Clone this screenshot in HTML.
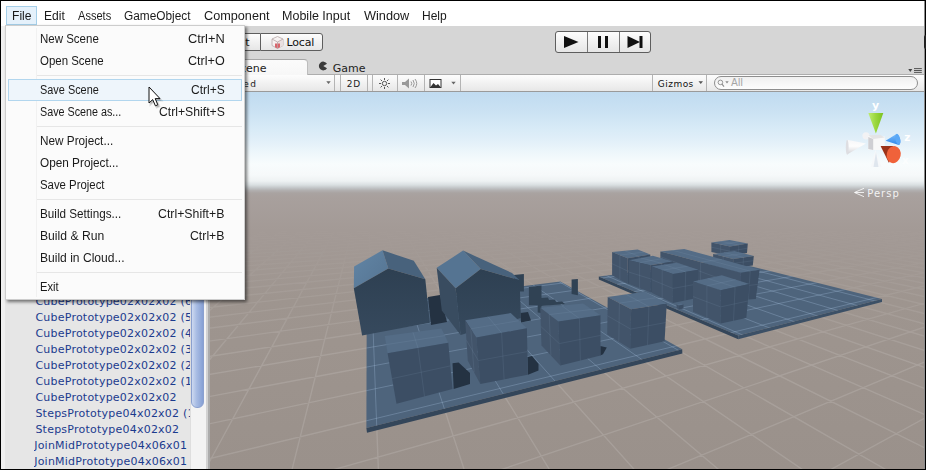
<!DOCTYPE html>
<html><head><meta charset="utf-8"><title>Unity</title>
<style>
html,body{margin:0;padding:0}
body{width:926px;height:470px;overflow:hidden;background:#000;position:relative;font-family:"Liberation Sans",sans-serif}
div,span,svg{position:absolute;box-sizing:border-box}
#root{left:0;top:0;width:926px;height:470px;overflow:hidden}
.t{white-space:pre}
#menubar{left:1px;top:1px;width:924px;height:25px;background:#fff}
#filebox{left:5.5px;top:6px;width:31.5px;height:19px;background:#e5f1fb;border:1px solid #a5cfe9}
#lstrip{left:1px;top:26px;width:4px;height:443px;background:#f0f0f0}
#hier{left:4.5px;top:59px;width:186px;height:410px;background:#e6e6e6}
#track{left:190px;top:59px;width:15.5px;height:410px;background:#f3f3f3;border-left:1px solid #dedede}
#thumb{left:191px;top:190px;width:12.5px;height:218px;border-radius:6px;background:linear-gradient(90deg,#cdd9f0,#a9bde4 40%,#86a0d4);border:1px solid #8aa0cf}
#div1{left:205.5px;top:59px;width:2px;height:410px;background:#d2d2d2}
#div2{left:207.5px;top:59px;width:2px;height:410px;background:#acacac}
.scene{left:0;top:0}
#menu{left:5px;top:25px;width:240px;height:275px;background:#fbfbfb;border:1px solid #cdcdcd;box-shadow:2px 2px 3px rgba(0,0,0,.5)}
#gut{left:36px;top:28px;width:1px;height:269px;background:#f1f1f1}
.sep{left:36.5px;width:205px;height:1px;background:#e6e6e6}
#hl{left:8px;top:79px;width:234px;height:21.5px;background:#eef5fb;border:1px solid #b2d6ee}
.btn{height:18px;top:33px;border:1px solid #5e5e5e;background:linear-gradient(#fdfdfd,#e6e6e6)}
#tabscene{left:209px;top:58.5px;width:98.5px;height:16.5px;background:linear-gradient(#fbfbfb,#f7f7f7);border:1px solid #a6a6a6;border-bottom:0;border-left:0;border-right-color:#bdbdbd;border-radius:0 4px 0 0}
#stb{left:209px;top:74px;width:715px;height:18px;background:linear-gradient(#fdfdfd,#e7e7e7);border-bottom:1px solid #9a9a9a;border-top:1px solid #adadad}
.vs{top:75px;width:1px;height:16px;background:#b4b4b4}
</style></head><body>
<div id="root">
<div id="menubar"></div>
<div id="filebox"></div>
<div id="toolbar" style="left:1px;top:26px;width:923.5px;height:49px;background:#d6d6d6"></div>
<div class="btn" style="left:235px;width:25px;border-radius:3px 0 0 3px;border-right:0"></div>
<div class="btn" style="left:259.5px;width:63px;border-radius:0 3px 3px 0">
<svg style="left:10.5px;top:2px" width="13" height="13" viewBox="0 0 13 13"><polygon points="6.500,0.500 12,3 12,9.500 6.500,12.500 1,9.500 1,3" fill="#f6f2f2" stroke="#b8a8a8" stroke-width="0.800"/><polygon points="6.500,6 12,3 12,9.500 6.500,12.500" fill="#e9e0e0"/><polygon points="4,7.500 9,7.500 9,11.300 6.500,12.500 4,11.300" fill="#d9656c"/><path d="M1 3 L6.500 6 L12 3 M6.500 6 L6.500 12.500" stroke="#b8a4a4" stroke-width="0.800" fill="none"/></svg></div>
<div class="btn" style="left:555px;top:31px;width:96px;height:22px;border-radius:3px"></div>
<div style="left:587px;top:32px;width:1px;height:20px;background:#7a7a7a"></div>
<div style="left:619px;top:32px;width:1px;height:20px;background:#7a7a7a"></div>
<svg style="left:555px;top:31px" width="96" height="22" viewBox="0 0 96 22"><polygon points="9,5 23.500,11 9,17" fill="#111"/><rect x="43" y="5" width="3" height="12" fill="#111"/><rect x="50" y="5" width="3" height="12" fill="#111"/><polygon points="72.500,5 85,11 72.500,17" fill="#111"/><rect x="84.500" y="5" width="3" height="12" fill="#111"/></svg>
<div style="left:923.7px;top:34.5px;width:2px;height:14.5px;background:#222;border-radius:2px 0 0 2px;z-index:5"></div>
<svg style="left:318px;top:61.4px" width="10" height="10" viewBox="0 0 10 10"><path d="M5.300 5 L9 2.700 A4.400 4.400 0 1 0 9 7.300 Z" fill="#3a3a3a"/></svg>
<svg style="left:906px;top:66px" width="18" height="9" viewBox="0 0 18 9"><polygon points="2.300,3 6.300,3 4.300,5.900" fill="#444"/><path d="M8 2.600h7.800M8 4.500h7.800M8 6.400h7.800" stroke="#444" stroke-width="0.9"/></svg>
<div id="stb"></div>
<div id="tabscene"></div>
<svg style="left:325.5px;top:80.5px" width="6" height="4" viewBox="0 0 6 4"><polygon points="0.300,0.300 4.700,0.300 2.500,3" fill="#666"/></svg>
<div class="vs" style="left:334px"></div><div class="vs" style="left:340px"></div>
<div class="vs" style="left:367px"></div><div class="vs" style="left:372px"></div>
<div class="vs" style="left:397px"></div><div class="vs" style="left:423.5px"></div><div class="vs" style="left:460.3px"></div>
<svg style="left:375.3px;top:76px" width="90" height="15" viewBox="0 0 90 15">
<g stroke="#444" stroke-width="0.9" fill="none"><circle cx="9.500" cy="7.500" r="2.200"/><path d="M9.500 2v2M9.500 11v2M4 7.500h2M13 7.500h2M5.600 3.600l1.400 1.400M12 10l1.400 1.400M13.400 3.600l-1.400 1.400M7 10l-1.400 1.400"/></g>
<g fill="#999"><polygon points="27,6 30,6 34,2.500 34,12.500 30,9 27,9"/></g><g stroke="#999" fill="none" stroke-width="1"><path d="M36 5.500q1.500 2 0 4M38 4q2.500 3.500 0 7M40 3q3.500 4.500 0 9"/></g>
<rect x="55" y="3.500" width="11" height="8" fill="#fff" stroke="#333" stroke-width="1"/><polygon points="55.500,11 58.500,7 61,9.500 63,8 65.500,11" fill="#333"/>
<polygon points="76.300,5.800 80.700,5.800 78.500,8.500" fill="#666"/>
</svg>
<div class="vs" style="left:651.5px"></div><div class="vs" style="left:706px"></div>
<svg style="left:698px;top:81px" width="6" height="4" viewBox="0 0 6 4"><polygon points="0.500,0.300 5,0.300 2.750,3" fill="#555"/></svg>
<div style="left:714px;top:76px;width:204px;height:14px;border:1px solid #8e8e8e;border-radius:7px;background:linear-gradient(#f0f0f0,#fdfdfd)"></div>
<svg style="left:717px;top:78px" width="14" height="11" viewBox="0 0 14 11"><circle cx="3.400" cy="4.400" r="2.300" fill="none" stroke="#8a8a8a" stroke-width="0.9"/><path d="M5 6.200L7 8.600" stroke="#8a8a8a" stroke-width="1.100"/><polygon points="8.300,3.200 11.700,3.200 10,5.600" fill="#8a8a8a"/></svg>
<svg class="scene" width="926" height="470" viewBox="0 0 926 470">
<defs>
<linearGradient id="sky" x1="0" y1="92" x2="0" y2="470" gradientUnits="userSpaceOnUse">
<stop offset="0.0000" stop-color="#c0dbf0"/>
<stop offset="0.0529" stop-color="#cbe2f3"/>
<stop offset="0.1005" stop-color="#d9ebf7"/>
<stop offset="0.1323" stop-color="#e3f0f9"/>
<stop offset="0.1614" stop-color="#eef7fb"/>
<stop offset="0.1905" stop-color="#f8fcfd"/>
<stop offset="0.2196" stop-color="#f6f9fa"/>
<stop offset="0.2354" stop-color="#eef2f3"/>
<stop offset="0.2460" stop-color="#d9dfe1"/>
<stop offset="0.2540" stop-color="#c1c4c6"/>
<stop offset="0.2606" stop-color="#b1afaf"/>
<stop offset="0.2672" stop-color="#a9a3a1"/>
<stop offset="0.2778" stop-color="#a8a09d"/>
<stop offset="0.3651" stop-color="#a39a96"/>
<stop offset="0.5503" stop-color="#9e958f"/>
<stop offset="1.0000" stop-color="#9a918b"/>
</linearGradient>
<linearGradient id="fade" x1="0" y1="200" x2="0" y2="360" gradientUnits="userSpaceOnUse">
<stop offset="0" stop-color="#fff" stop-opacity="0"/>
<stop offset="0.3" stop-color="#fff" stop-opacity="0.12"/>
<stop offset="0.6" stop-color="#fff" stop-opacity="0.55"/>
<stop offset="1" stop-color="#fff" stop-opacity="1"/>
</linearGradient>
<linearGradient id="rl" x1="354" y1="255" x2="390" y2="285" gradientUnits="userSpaceOnUse"><stop offset="0" stop-color="#6184a4"/><stop offset="1" stop-color="#557492"/></linearGradient>
<linearGradient id="hf" x1="0" y1="270" x2="0" y2="335" gradientUnits="userSpaceOnUse"><stop offset="0" stop-color="#2e4052"/><stop offset="1" stop-color="#36495d"/></linearGradient>
<mask id="gm"><rect x="0" y="190" width="926" height="300" fill="url(#fade)"/></mask>
<clipPath id="cv"><rect x="209.5" y="92" width="714.5" height="377"/></clipPath>
<clipPath id="sc1"><polygon points="366.4,428.0 682.2,349.2 560.3,281.4 366.7,305.7"/><polygon points="598.8,276.5 738.2,335.6 882.0,299.0 727.0,260.4"/></clipPath>
</defs>
<g clip-path="url(#cv)">
<rect x="209" y="92" width="715" height="377" fill="url(#sky)"/>
<path d="M-69442.5 5522.4L-86.8 206.0M-67691.6 5540.3L-70.3 205.7M-65940.6 5558.2L-54.3 205.5M-64189.6 5576.1L-38.6 205.2M-62438.6 5594.0L-23.3 204.9M-60687.6 5611.9L-8.3 204.7M-58936.6 5629.8L6.4 204.4M-57185.6 5647.7L20.8 204.2M-55434.7 5665.6L34.9 203.9M-53683.7 5683.5L48.6 203.7M-51932.7 5701.4L62.1 203.5M-50181.7 5719.3L75.3 203.2M-48430.7 5737.2L88.3 203.0M-46679.7 5755.2L101.0 202.8M-44928.7 5773.1L113.4 202.6M-43177.8 5791.0L125.6 202.4M-41426.8 5808.9L137.6 202.2M-39675.8 5826.8L149.3 202.0M-37924.8 5844.7L160.8 201.8M-36173.8 5862.6L172.1 201.6M-34422.8 5880.5L183.2 201.4M-32671.8 5898.4L194.0 201.2M-30920.9 5916.3L204.7 201.0M-29169.9 5934.2L215.2 200.8M-27418.9 5952.1L225.5 200.7M-25667.9 5970.0L235.6 200.5M-23916.9 5987.9L245.5 200.3M-22165.9 6005.8L255.3 200.2M-20414.9 6023.8L264.9 200.0M-18664.0 6041.7L274.3 199.8M-16913.0 6059.6L283.5 199.7M-15162.0 6077.5L292.6 199.5M-13411.0 6095.4L301.6 199.4M-11660.0 6113.3L310.4 199.2M-9909.0 6131.2L319.0 199.1M-8158.0 6149.1L327.5 198.9M-6407.1 6167.0L335.9 198.8M-4656.1 6184.9L344.1 198.6M-2905.1 6202.8L352.3 198.5M-1154.1 6220.7L360.2 198.4M596.9 6238.6L368.1 198.2M2347.9 6256.5L375.8 198.1M2995.7 4470.3L383.4 198.0M2087.0 2091.4L390.9 197.8M1826.7 1410.0L398.3 197.7M1703.3 1086.9L405.6 197.6M1631.3 898.4L412.7 197.5M1584.1 774.8L419.8 197.4M1550.8 687.6L426.7 197.2M1526.0 622.7L433.6 197.1M1506.8 572.6L440.3 197.0M1491.6 532.6L446.9 196.9M1479.2 500.1L453.5 196.8M1468.9 473.1L459.9 196.7M1460.2 450.3L466.3 196.6M1452.7 430.8L472.6 196.5M1446.3 414.0L478.8 196.3M1440.6 399.3L484.9 196.2M1435.7 386.3L490.9 196.1M1431.3 374.8L496.8 196.0M1427.4 364.5L502.7 195.9M1423.8 355.3L508.5 195.8M1420.6 346.9L514.2 195.7M1417.7 339.3L519.8 195.6M1415.1 332.4L525.3 195.6M1412.7 326.0L530.8 195.5M1410.4 320.2L536.2 195.4M1408.4 314.8L541.5 195.3M1406.5 309.8L546.8 195.2M1404.7 305.2L552.0 195.1M1403.1 300.9L557.1 195.0M1401.5 296.9L562.2 194.9M1400.1 293.1L567.2 194.8M1398.8 289.6L572.1 194.8M1397.5 286.3L577.0 194.7M1396.3 283.2L581.8 194.6M1395.2 280.3L586.6 194.5M1394.1 277.5L591.3 194.4M1393.1 274.9L595.9 194.3M1392.2 272.4L600.5 194.3M1391.3 270.1L605.0 194.2M1390.5 267.9L609.5 194.1M1389.6 265.7L613.9 194.0M1388.9 263.7L618.3 194.0M1388.1 261.8L622.6 193.9M1387.4 260.0L626.9 193.8M1386.8 258.2L631.1 193.7M1386.1 256.5L635.3 193.7M1385.5 254.9L639.4 193.6M1384.9 253.4L643.5 193.5M1384.4 251.9L647.5 193.5M1383.8 250.5L651.5 193.4M1383.3 249.1L655.5 193.3M1382.8 247.8L659.4 193.3M1382.3 246.6L663.2 193.2M1381.9 245.4L667.0 193.1M1381.4 244.2L670.8 193.1M1381.0 243.1L674.6 193.0M1380.6 242.0L678.2 192.9M1380.2 240.9L681.9 192.9M1379.8 239.9L685.5 192.8M1379.4 238.9L689.1 192.8M1379.0 238.0L692.6 192.7M1378.7 237.1L696.1 192.6M1378.3 236.2L699.6 192.6M1378.0 235.3L703.0 192.5M1377.7 234.5L706.4 192.5M1377.4 233.7L709.7 192.4M1377.1 232.9L713.1 192.3M1376.8 232.1L716.4 192.3M11456.8 7145.3L1401.3 211.6M7722.6 7107.1L1384.6 211.0M3988.4 7069.0L1368.5 210.3M254.2 7030.8L1352.8 209.7M-3480.1 6992.6L1337.7 209.1M-7214.3 6954.4L1323.0 208.6M-10948.5 6916.2L1308.7 208.0M-14682.7 6878.0L1294.9 207.5M-18416.9 6839.8L1281.4 206.9M-22151.1 6801.6L1268.4 206.4M-25885.3 6763.4L1255.7 205.9M-29619.5 6725.3L1243.3 205.4M-33353.7 6687.1L1231.3 205.0M-37087.9 6648.9L1219.6 204.5M-40822.1 6610.7L1208.3 204.1M-44556.3 6572.5L1197.2 203.6M-48290.5 6534.3L1186.4 203.2M-52024.7 6496.1L1175.9 202.8M-55758.9 6457.9L1165.7 202.4M-59493.1 6419.8L1155.7 202.0M-63227.3 6381.6L1146.0 201.6M-66961.5 6343.4L1136.5 201.3M-70695.7 6305.2L1127.2 200.9M-74429.9 6267.0L1118.2 200.6M-78164.2 6228.8L1109.3 200.2M-17870.1 1569.2L1100.7 199.9M-9381.2 918.5L1092.3 199.5M-6284.9 681.1L1084.0 199.2M-4681.4 558.2L1076.0 198.9M-3700.8 483.0L1068.1 198.6M-3039.2 432.3L1060.4 198.3M-2562.7 395.8L1052.9 198.0M-2203.1 368.2L1045.5 197.7M-1922.2 346.7L1038.3 197.4M-1696.6 329.4L1031.2 197.2M-1511.5 315.2L1024.3 196.9M-1356.9 303.4L1017.5 196.6M-1225.8 293.3L1010.9 196.4M-1113.2 284.7L1004.4 196.1M-1015.5 277.2L998.0 195.9M-929.8 270.6L991.8 195.6M-854.2 264.8L985.6 195.4M-786.9 259.7L979.6 195.1M-726.7 255.1L973.7 194.9M-672.4 250.9L968.0 194.7M-623.2 247.1L962.3 194.5M-578.5 243.7L956.7 194.3M-537.7 240.6L951.3 194.0M-500.2 237.7L945.9 193.8M-465.7 235.1L940.7 193.6M-433.9 232.6L935.5 193.4M-404.4 230.4L930.4 193.2M-377.0 228.3L925.4 193.0M-351.4 226.3L920.5 192.8M-327.6 224.5L915.7 192.6M-305.3 222.8L911.0 192.5M-284.4 221.2L906.3 192.3M-264.7 219.6L901.8 192.1M-246.2 218.2L897.3 191.9M-228.8 216.9L892.9 191.8M-212.3 215.6L888.5 191.6M-196.7 214.4L884.2 191.4M-181.9 213.3L880.0 191.3M-167.9 212.2L875.9 191.1M-154.6 211.2L871.8 190.9M-141.9 210.2L867.8 190.8M-129.8 209.3L863.9 190.6M-118.3 208.4L860.0 190.5M-107.3 207.6L856.2 190.3M-96.8 206.8L852.4 190.2M-86.8 206.0L848.7 190.0M-77.1 205.3L845.1 189.9M-67.9 204.6L841.5 189.7M-59.1 203.9L837.9 189.6M-50.6 203.2L834.4 189.5M-42.4 202.6L831.0 189.3M-34.5 202.0L827.6 189.2M-27.0 201.4L824.3 189.1M-19.7 200.9L821.0 188.9M-12.7 200.3L817.8 188.8" stroke="#ffffff" stroke-opacity="0.125" stroke-width="1.4" fill="none" mask="url(#gm)"/>
<polygon points="366.4,428.0 682.2,349.2 560.3,281.4 366.7,305.7" fill="#4e647c" />
<polygon points="366.4,428.0 682.2,349.2 682.4,353.4 367.0,432.8" fill="#34465a" />
<polygon points="598.8,276.5 738.2,335.6 882.0,299.0 727.0,260.4" fill="#4e647c" />
<polygon points="598.8,276.5 738.2,335.6 738.2,339.2 598.8,279.6" fill="#34465a" />
<polygon points="738.2,335.6 882.0,299.0 882.0,302.0 738.2,339.2" fill="#3c5066" />
<path d="M-69442.5 5522.4L-86.8 206.0M-67691.6 5540.3L-70.3 205.7M-65940.6 5558.2L-54.3 205.5M-64189.6 5576.1L-38.6 205.2M-62438.6 5594.0L-23.3 204.9M-60687.6 5611.9L-8.3 204.7M-58936.6 5629.8L6.4 204.4M-57185.6 5647.7L20.8 204.2M-55434.7 5665.6L34.9 203.9M-53683.7 5683.5L48.6 203.7M-51932.7 5701.4L62.1 203.5M-50181.7 5719.3L75.3 203.2M-48430.7 5737.2L88.3 203.0M-46679.7 5755.2L101.0 202.8M-44928.7 5773.1L113.4 202.6M-43177.8 5791.0L125.6 202.4M-41426.8 5808.9L137.6 202.2M-39675.8 5826.8L149.3 202.0M-37924.8 5844.7L160.8 201.8M-36173.8 5862.6L172.1 201.6M-34422.8 5880.5L183.2 201.4M-32671.8 5898.4L194.0 201.2M-30920.9 5916.3L204.7 201.0M-29169.9 5934.2L215.2 200.8M-27418.9 5952.1L225.5 200.7M-25667.9 5970.0L235.6 200.5M-23916.9 5987.9L245.5 200.3M-22165.9 6005.8L255.3 200.2M-20414.9 6023.8L264.9 200.0M-18664.0 6041.7L274.3 199.8M-16913.0 6059.6L283.5 199.7M-15162.0 6077.5L292.6 199.5M-13411.0 6095.4L301.6 199.4M-11660.0 6113.3L310.4 199.2M-9909.0 6131.2L319.0 199.1M-8158.0 6149.1L327.5 198.9M-6407.1 6167.0L335.9 198.8M-4656.1 6184.9L344.1 198.6M-2905.1 6202.8L352.3 198.5M-1154.1 6220.7L360.2 198.4M596.9 6238.6L368.1 198.2M2347.9 6256.5L375.8 198.1M2995.7 4470.3L383.4 198.0M2087.0 2091.4L390.9 197.8M1826.7 1410.0L398.3 197.7M1703.3 1086.9L405.6 197.6M1631.3 898.4L412.7 197.5M1584.1 774.8L419.8 197.4M1550.8 687.6L426.7 197.2M1526.0 622.7L433.6 197.1M1506.8 572.6L440.3 197.0M1491.6 532.6L446.9 196.9M1479.2 500.1L453.5 196.8M1468.9 473.1L459.9 196.7M1460.2 450.3L466.3 196.6M1452.7 430.8L472.6 196.5M1446.3 414.0L478.8 196.3M1440.6 399.3L484.9 196.2M1435.7 386.3L490.9 196.1M1431.3 374.8L496.8 196.0M1427.4 364.5L502.7 195.9M1423.8 355.3L508.5 195.8M1420.6 346.9L514.2 195.7M1417.7 339.3L519.8 195.6M1415.1 332.4L525.3 195.6M1412.7 326.0L530.8 195.5M1410.4 320.2L536.2 195.4M1408.4 314.8L541.5 195.3M1406.5 309.8L546.8 195.2M1404.7 305.2L552.0 195.1M1403.1 300.9L557.1 195.0M1401.5 296.9L562.2 194.9M1400.1 293.1L567.2 194.8M1398.8 289.6L572.1 194.8M1397.5 286.3L577.0 194.7M1396.3 283.2L581.8 194.6M1395.2 280.3L586.6 194.5M1394.1 277.5L591.3 194.4M1393.1 274.9L595.9 194.3M1392.2 272.4L600.5 194.3M1391.3 270.1L605.0 194.2M1390.5 267.9L609.5 194.1M1389.6 265.7L613.9 194.0M1388.9 263.7L618.3 194.0M1388.1 261.8L622.6 193.9M1387.4 260.0L626.9 193.8M1386.8 258.2L631.1 193.7M1386.1 256.5L635.3 193.7M1385.5 254.9L639.4 193.6M1384.9 253.4L643.5 193.5M1384.4 251.9L647.5 193.5M1383.8 250.5L651.5 193.4M1383.3 249.1L655.5 193.3M1382.8 247.8L659.4 193.3M1382.3 246.6L663.2 193.2M1381.9 245.4L667.0 193.1M1381.4 244.2L670.8 193.1M1381.0 243.1L674.6 193.0M1380.6 242.0L678.2 192.9M1380.2 240.9L681.9 192.9M1379.8 239.9L685.5 192.8M1379.4 238.9L689.1 192.8M1379.0 238.0L692.6 192.7M1378.7 237.1L696.1 192.6M1378.3 236.2L699.6 192.6M1378.0 235.3L703.0 192.5M1377.7 234.5L706.4 192.5M1377.4 233.7L709.7 192.4M1377.1 232.9L713.1 192.3M1376.8 232.1L716.4 192.3M11456.8 7145.3L1401.3 211.6M7722.6 7107.1L1384.6 211.0M3988.4 7069.0L1368.5 210.3M254.2 7030.8L1352.8 209.7M-3480.1 6992.6L1337.7 209.1M-7214.3 6954.4L1323.0 208.6M-10948.5 6916.2L1308.7 208.0M-14682.7 6878.0L1294.9 207.5M-18416.9 6839.8L1281.4 206.9M-22151.1 6801.6L1268.4 206.4M-25885.3 6763.4L1255.7 205.9M-29619.5 6725.3L1243.3 205.4M-33353.7 6687.1L1231.3 205.0M-37087.9 6648.9L1219.6 204.5M-40822.1 6610.7L1208.3 204.1M-44556.3 6572.5L1197.2 203.6M-48290.5 6534.3L1186.4 203.2M-52024.7 6496.1L1175.9 202.8M-55758.9 6457.9L1165.7 202.4M-59493.1 6419.8L1155.7 202.0M-63227.3 6381.6L1146.0 201.6M-66961.5 6343.4L1136.5 201.3M-70695.7 6305.2L1127.2 200.9M-74429.9 6267.0L1118.2 200.6M-78164.2 6228.8L1109.3 200.2M-17870.1 1569.2L1100.7 199.9M-9381.2 918.5L1092.3 199.5M-6284.9 681.1L1084.0 199.2M-4681.4 558.2L1076.0 198.9M-3700.8 483.0L1068.1 198.6M-3039.2 432.3L1060.4 198.3M-2562.7 395.8L1052.9 198.0M-2203.1 368.2L1045.5 197.7M-1922.2 346.7L1038.3 197.4M-1696.6 329.4L1031.2 197.2M-1511.5 315.2L1024.3 196.9M-1356.9 303.4L1017.5 196.6M-1225.8 293.3L1010.9 196.4M-1113.2 284.7L1004.4 196.1M-1015.5 277.2L998.0 195.9M-929.8 270.6L991.8 195.6M-854.2 264.8L985.6 195.4M-786.9 259.7L979.6 195.1M-726.7 255.1L973.7 194.9M-672.4 250.9L968.0 194.7M-623.2 247.1L962.3 194.5M-578.5 243.7L956.7 194.3M-537.7 240.6L951.3 194.0M-500.2 237.7L945.9 193.8M-465.7 235.1L940.7 193.6M-433.9 232.6L935.5 193.4M-404.4 230.4L930.4 193.2M-377.0 228.3L925.4 193.0M-351.4 226.3L920.5 192.8M-327.6 224.5L915.7 192.6M-305.3 222.8L911.0 192.5M-284.4 221.2L906.3 192.3M-264.7 219.6L901.8 192.1M-246.2 218.2L897.3 191.9M-228.8 216.9L892.9 191.8M-212.3 215.6L888.5 191.6M-196.7 214.4L884.2 191.4M-181.9 213.3L880.0 191.3M-167.9 212.2L875.9 191.1M-154.6 211.2L871.8 190.9M-141.9 210.2L867.8 190.8M-129.8 209.3L863.9 190.6M-118.3 208.4L860.0 190.5M-107.3 207.6L856.2 190.3M-96.8 206.8L852.4 190.2M-86.8 206.0L848.7 190.0M-77.1 205.3L845.1 189.9M-67.9 204.6L841.5 189.7M-59.1 203.9L837.9 189.6M-50.6 203.2L834.4 189.5M-42.4 202.6L831.0 189.3M-34.5 202.0L827.6 189.2M-27.0 201.4L824.3 189.1M-19.7 200.9L821.0 188.9M-12.7 200.3L817.8 188.8" stroke="#a8c4e0" stroke-opacity="0.30" stroke-width="1" fill="none" clip-path="url(#sc1)"/>
<polygon points="711.4,242.5 729.5,240.0 747.8,243.5 730.0,246.5" fill="#546c86" />
<polygon points="711.4,242.5 730.0,246.5 730.0,256.0 711.4,252.0" fill="#42546a" />
<path d="M720.7 244.5L720.7 254.0M730.0 251.2L711.4 247.2" stroke="#9ab8d6" stroke-opacity="0.11" stroke-width="1" fill="none"/>
<polygon points="730.0,246.5 747.8,243.5 747.0,253.0 730.0,256.0" fill="#3c4e64" />
<path d="M738.9 245.0L738.5 254.5M747.4 248.2L730.0 251.2" stroke="#9ab8d6" stroke-opacity="0.11" stroke-width="1" fill="none"/>
<path d="M720.5 241.2L738.9 245.0M738.6 241.8L720.7 244.5" stroke="#9ab8d6" stroke-opacity="0.11" stroke-width="1" fill="none"/>
<polygon points="713.1,253.9 734.5,250.9 753.8,255.9 733.2,258.9" fill="#546c86" />
<polygon points="713.1,253.9 733.2,258.9 733.2,268.0 713.1,262.0" fill="#42546a" />
<path d="M723.2 256.4L723.2 265.0M733.2 263.4L713.1 257.9" stroke="#9ab8d6" stroke-opacity="0.11" stroke-width="1" fill="none"/>
<polygon points="733.2,258.9 753.8,255.9 752.8,265.5 733.2,268.0" fill="#3c4e64" />
<path d="M743.5 257.4L743.0 266.8M753.3 260.7L733.2 263.4" stroke="#9ab8d6" stroke-opacity="0.11" stroke-width="1" fill="none"/>
<path d="M723.8 252.4L743.5 257.4M744.1 253.4L723.2 256.4" stroke="#9ab8d6" stroke-opacity="0.11" stroke-width="1" fill="none"/>
<polygon points="660.4,251.4 684.2,248.9 759.6,269.7 740.8,272.7" fill="#546c86" />
<polygon points="660.4,251.4 740.8,272.7 740.8,300.0 660.4,262.0" fill="#42546a" />
<path d="M700.6 262.1L700.6 281.0M740.8 286.4L660.4 256.7" stroke="#9ab8d6" stroke-opacity="0.11" stroke-width="1" fill="none"/>
<polygon points="740.8,272.7 759.6,269.7 755.8,299.1 740.8,300.0" fill="#3c4e64" />
<path d="M750.2 271.2L748.3 299.6M757.7 284.4L740.8 286.4" stroke="#9ab8d6" stroke-opacity="0.11" stroke-width="1" fill="none"/>
<path d="M672.3 250.2L750.2 271.2M721.9 259.3L700.6 262.1" stroke="#9ab8d6" stroke-opacity="0.11" stroke-width="1" fill="none"/>
<polygon points="612.1,252.1 637.7,249.6 650.3,254.6 627.7,258.2" fill="#546c86" />
<polygon points="612.1,252.1 627.7,258.2 627.7,284.0 612.1,275.3" fill="#42546a" />
<path d="M619.9 255.1L619.9 279.6M627.7 271.1L612.1 263.7" stroke="#9ab8d6" stroke-opacity="0.11" stroke-width="1" fill="none"/>
<polygon points="627.7,258.2 650.3,254.6 650.3,280.0 627.7,284.0" fill="#3c4e64" />
<path d="M639.0 256.4L639.0 282.0M650.3 267.3L627.7 271.1" stroke="#9ab8d6" stroke-opacity="0.11" stroke-width="1" fill="none"/>
<path d="M624.9 250.8L639.0 256.4M644.0 252.1L619.9 255.1" stroke="#9ab8d6" stroke-opacity="0.11" stroke-width="1" fill="none"/>
<polygon points="629.0,260.2 652.8,255.7 672.9,261.4 650.3,265.2" fill="#546c86" />
<polygon points="629.0,260.2 650.3,265.2 650.3,292.3 629.0,284.0" fill="#42546a" />
<path d="M639.6 262.7L639.6 288.1M650.3 278.8L629.0 272.1" stroke="#9ab8d6" stroke-opacity="0.11" stroke-width="1" fill="none"/>
<polygon points="650.3,265.2 672.9,261.4 672.9,288.0 650.3,292.3" fill="#3c4e64" />
<path d="M661.6 263.3L661.6 290.1M672.9 274.7L650.3 278.8" stroke="#9ab8d6" stroke-opacity="0.11" stroke-width="1" fill="none"/>
<path d="M640.9 257.9L661.6 263.3M662.8 258.5L639.6 262.7" stroke="#9ab8d6" stroke-opacity="0.11" stroke-width="1" fill="none"/>
<polygon points="651.6,266.5 676.7,262.7 698.5,269.7 672.9,274.0" fill="#546c86" />
<polygon points="651.6,266.5 672.9,274.0 672.9,302.9 651.6,292.8" fill="#42546a" />
<path d="M662.2 270.2L662.2 297.9M672.9 288.4L651.6 279.6" stroke="#9ab8d6" stroke-opacity="0.11" stroke-width="1" fill="none"/>
<polygon points="672.9,274.0 698.5,269.7 697.0,298.0 672.9,302.9" fill="#3c4e64" />
<path d="M685.7 271.9L685.0 300.4M697.8 283.9L672.9 288.4" stroke="#9ab8d6" stroke-opacity="0.11" stroke-width="1" fill="none"/>
<path d="M664.2 264.6L685.7 271.9M687.6 266.2L662.2 270.2" stroke="#9ab8d6" stroke-opacity="0.11" stroke-width="1" fill="none"/>
<polygon points="676.5,304.5 681.0,303.6 683.5,304.6 679.0,305.6" fill="#546c86" />
<polygon points="676.5,304.5 679.0,305.6 679.0,309.5 676.5,308.3" fill="#42546a" />
<polygon points="679.0,305.6 683.5,304.6 683.5,308.5 679.0,309.5" fill="#3c4e64" />
<polygon points="693.0,281.5 721.9,275.3 749.5,284.0 720.7,290.3" fill="#546c86" />
<polygon points="693.0,281.5 720.7,290.3 720.7,323.5 693.0,311.7" fill="#42546a" />
<path d="M706.9 285.9L706.9 317.6M720.7 306.9L693.0 296.6" stroke="#9ab8d6" stroke-opacity="0.11" stroke-width="1" fill="none"/>
<polygon points="720.7,290.3 749.5,284.0 746.3,318.0 720.7,323.5" fill="#3c4e64" />
<path d="M735.1 287.1L733.5 320.8M747.9 301.0L720.7 306.9" stroke="#9ab8d6" stroke-opacity="0.11" stroke-width="1" fill="none"/>
<path d="M707.5 278.4L735.1 287.1M735.7 279.6L706.9 285.9" stroke="#9ab8d6" stroke-opacity="0.11" stroke-width="1" fill="none"/>
<polygon points="428.0,297.0 440.0,295.0 447.0,322.0 431.0,325.0" fill="#243242" />
<polygon points="520.5,313.0 528.0,312.0 531.0,320.5 521.0,322.5" fill="#243242" />
<polygon points="537.7,305.0 541.5,304.6 541.5,313.0 537.7,312.5" fill="#304254" />
<polygon points="452.5,363.2 458.6,362.4 470.0,373.0 470.0,384.0 453.7,389.0" fill="#243242" />
<polygon points="527.5,357.0 532.0,356.0 538.5,364.0 538.5,370.5 528.0,374.8" fill="#243242" />
<polygon points="600.3,346.0 606.8,347.6 603.0,354.3 600.3,355.5" fill="#243242" />
<polygon points="513.8,275.0 523.9,274.0 523.9,291.4 513.8,291.4" fill="#304254" />
<polygon points="528.9,287.0 541.5,285.5 541.5,305.2 528.9,305.2" fill="#304254" />
<polygon points="571.6,279.6 577.9,279.0 577.9,295.2 571.6,294.0" fill="#304254" />
<polygon points="541.0,298.0 548.0,297.5 549.0,300.0 555.0,299.5 556.0,302.0 562.0,301.5 565.0,304.0 541.0,306.0" fill="#304254" />
<polygon points="354.1,266.5 382.5,250.3 388.3,268.4 353.8,288.2" fill="url(#rl)" />
<polygon points="382.5,250.3 413.8,260.8 425.3,279.3 388.3,268.4" fill="#48627c" />
<polygon points="353.8,288.2 388.3,268.4 425.3,279.3 429.8,322.8 362.1,335.5" fill="url(#hf)" />
<polygon points="436.7,267.7 463.1,250.6 480.7,268.9 455.6,288.3" fill="url(#rl)" />
<polygon points="463.1,250.6 512.0,273.0 519.6,280.2 480.7,268.9" fill="#48627c" />
<polygon points="436.7,267.7 455.6,288.3 460.6,335.0 441.8,310.4" fill="#394c60" />
<polygon points="455.6,288.3 480.7,268.9 519.6,280.2 520.9,318.0 460.6,335.0" fill="url(#hf)" />
<polygon points="384.7,336.0 441.4,328.6 448.3,342.7 387.6,353.3" fill="#546c86" />
<polygon points="387.6,353.3 448.3,342.7 452.5,389.0 396.5,403.8" fill="#3c4e64" />
<path d="M418.0 348.0L424.5 396.4M450.4 365.9L392.1 378.6" stroke="#9ab8d6" stroke-opacity="0.11" stroke-width="1" fill="none"/>
<path d="M413.0 332.3L418.0 348.0M444.9 335.6L386.1 344.6" stroke="#9ab8d6" stroke-opacity="0.11" stroke-width="1" fill="none"/>
<polygon points="465.2,320.2 510.7,313.1 526.9,328.3 476.3,337.4" fill="#546c86" />
<polygon points="465.2,320.2 476.3,337.4 480.3,383.9 467.8,360.7" fill="#42546a" />
<path d="M470.8 328.8L474.1 372.3M478.3 360.6L466.5 340.4" stroke="#9ab8d6" stroke-opacity="0.11" stroke-width="1" fill="none"/>
<polygon points="476.3,337.4 526.9,328.3 527.9,374.8 480.3,383.9" fill="#3c4e64" />
<path d="M501.6 332.9L504.1 379.4M527.4 351.6L478.3 360.6" stroke="#9ab8d6" stroke-opacity="0.11" stroke-width="1" fill="none"/>
<path d="M487.9 316.6L501.6 332.9M518.8 320.7L470.8 328.8" stroke="#9ab8d6" stroke-opacity="0.11" stroke-width="1" fill="none"/>
<polygon points="540.2,307.7 583.0,303.5 600.5,315.3 558.3,321.6" fill="#546c86" />
<polygon points="540.2,307.7 558.3,321.6 560.3,365.5 541.5,345.4" fill="#42546a" />
<path d="M549.2 314.6L550.9 355.4M559.3 343.6L540.9 326.5" stroke="#9ab8d6" stroke-opacity="0.11" stroke-width="1" fill="none"/>
<polygon points="558.3,321.6 600.5,315.3 600.5,355.5 560.3,365.5" fill="#3c4e64" />
<path d="M579.4 318.5L580.4 360.5M600.5 335.4L559.3 343.6" stroke="#9ab8d6" stroke-opacity="0.11" stroke-width="1" fill="none"/>
<path d="M561.6 305.6L579.4 318.5M591.8 309.4L549.2 314.6" stroke="#9ab8d6" stroke-opacity="0.11" stroke-width="1" fill="none"/>
<polygon points="607.7,297.0 644.7,291.7 666.7,303.8 631.1,309.3" fill="#546c86" />
<polygon points="607.7,297.0 631.1,309.3 630.3,348.8 607.2,334.5" fill="#42546a" />
<path d="M619.4 303.1L618.8 341.6M630.7 329.1L607.5 315.8" stroke="#9ab8d6" stroke-opacity="0.11" stroke-width="1" fill="none"/>
<polygon points="631.1,309.3 666.7,303.8 664.6,341.2 630.3,348.8" fill="#3c4e64" />
<path d="M648.9 306.6L647.5 345.0M665.7 322.5L630.7 329.1" stroke="#9ab8d6" stroke-opacity="0.11" stroke-width="1" fill="none"/>
<path d="M626.2 294.4L648.9 306.6M655.7 297.8L619.4 303.1" stroke="#9ab8d6" stroke-opacity="0.11" stroke-width="1" fill="none"/>
<g>
<defs>
<linearGradient id="gg" x1="868" y1="0" x2="884" y2="0" gradientUnits="userSpaceOnUse"><stop offset="0" stop-color="#c0ee74"/><stop offset="0.45" stop-color="#9cd840"/><stop offset="1" stop-color="#78c01c"/></linearGradient>
<linearGradient id="gb" x1="0" y1="134" x2="0" y2="145" gradientUnits="userSpaceOnUse"><stop offset="0" stop-color="#78bcfa"/><stop offset="1" stop-color="#2f86ea"/></linearGradient>
<linearGradient id="gw" x1="0" y1="139" x2="0" y2="155" gradientUnits="userSpaceOnUse"><stop offset="0" stop-color="#f6f6f8"/><stop offset="0.45" stop-color="#fdfdfd"/><stop offset="1" stop-color="#cfcfd4"/></linearGradient>
</defs>
<polygon points="870.7,167 881.7,167 875.4,150" fill="#f6f8fa"/>
<polygon points="873.5,167 878.5,167 876,152" fill="#dfe6ee"/>
<polygon points="847,139.700 847,154.600 866,143.600" fill="url(#gw)"/>
<ellipse cx="847.2" cy="147.150" rx="1.400" ry="7.400" fill="#dedee2"/>
<circle cx="866" cy="135.800" r="3.600" fill="#f2f2f4"/>
<polygon points="868.3,135.500 884.8,136.500 884.8,150 868.3,150" fill="#f8f8f8"/>
<polygon points="868.3,137 873.200,139 873.200,150 868.300,149" fill="#cfcfd3"/>
<polygon points="868.3,135.200 880,134.800 884.800,137.500 873.200,139" fill="#e4e4e6"/>
<polygon points="868.3,113 883.3,113 875.9,133.400" fill="url(#gg)"/>
<path d="M885.600 140.800 L896.500 133.900 A2.600 5.600 -12 0 1 898.800 144.900 Z" fill="url(#gb)"/>
<ellipse cx="897.8" cy="139.400" rx="2.300" ry="5.600" fill="#5aa8f6" transform="rotate(-12 897.8 139.4)"/>
<polygon points="880.6,146 893.500,146 889,163" fill="#9c3218"/>
<ellipse cx="893.7" cy="154.600" rx="7" ry="8.600" fill="#f0623a" transform="rotate(12 893.7 154.6)"/>
<text x="872" y="109.300" font-family="'DejaVu Sans','Liberation Sans',sans-serif" font-weight="bold" font-size="11" fill="#fff">y</text>
<text x="904.3" y="141" font-family="'DejaVu Sans','Liberation Sans',sans-serif" font-weight="bold" font-size="10.500" fill="#fff">z</text>
<text x="902" y="164" font-family="'DejaVu Sans','Liberation Sans',sans-serif" font-weight="bold" font-size="10.500" fill="#fff" fill-opacity="0.65">x</text>
<g stroke="#fff" stroke-width="0.9" stroke-opacity="0.9" fill="none"><path d="M864 188.300 L854.500 192.500 L864 196.700 M864 192.500 L855 192.500"/></g>
<text x="867.2" y="196.800" font-family="'DejaVu Sans','Liberation Sans',sans-serif" font-size="10" letter-spacing="1.050" fill="#fff" fill-opacity="0.88">Persp</text>
</g>
</g>
</svg>
<div id="lstrip"></div>
<div id="hier"></div>
<div id="track"></div><div id="thumb"></div>
<div id="div1"></div><div id="div2"></div>
<span class="t" style="left:35.4px;top:293.69px;font-family:'DejaVu Sans','Liberation Sans',sans-serif;font-size:11px;line-height:15px;height:15px;color:#1b3b8e;letter-spacing:0.23px;width:155.1px;overflow:hidden;">CubePrototype02x02x02 (6)</span>
<span class="t" style="left:35.4px;top:309.69px;font-family:'DejaVu Sans','Liberation Sans',sans-serif;font-size:11px;line-height:15px;height:15px;color:#1b3b8e;letter-spacing:0.23px;width:155.1px;overflow:hidden;">CubePrototype02x02x02 (5)</span>
<span class="t" style="left:35.4px;top:325.69px;font-family:'DejaVu Sans','Liberation Sans',sans-serif;font-size:11px;line-height:15px;height:15px;color:#1b3b8e;letter-spacing:0.23px;width:155.1px;overflow:hidden;">CubePrototype02x02x02 (4)</span>
<span class="t" style="left:35.4px;top:341.69px;font-family:'DejaVu Sans','Liberation Sans',sans-serif;font-size:11px;line-height:15px;height:15px;color:#1b3b8e;letter-spacing:0.23px;width:155.1px;overflow:hidden;">CubePrototype02x02x02 (3)</span>
<span class="t" style="left:35.4px;top:357.69px;font-family:'DejaVu Sans','Liberation Sans',sans-serif;font-size:11px;line-height:15px;height:15px;color:#1b3b8e;letter-spacing:0.23px;width:155.1px;overflow:hidden;">CubePrototype02x02x02 (2)</span>
<span class="t" style="left:35.4px;top:373.69px;font-family:'DejaVu Sans','Liberation Sans',sans-serif;font-size:11px;line-height:15px;height:15px;color:#1b3b8e;letter-spacing:0.23px;width:155.1px;overflow:hidden;">CubePrototype02x02x02 (1)</span>
<span class="t" style="left:35.4px;top:389.69px;font-family:'DejaVu Sans','Liberation Sans',sans-serif;font-size:11px;line-height:15px;height:15px;color:#1b3b8e;letter-spacing:0.23px;width:155.1px;overflow:hidden;">CubePrototype02x02x02</span>
<span class="t" style="left:35.4px;top:405.69px;font-family:'DejaVu Sans','Liberation Sans',sans-serif;font-size:11px;line-height:15px;height:15px;color:#1b3b8e;letter-spacing:0.23px;width:155.1px;overflow:hidden;">StepsPrototype04x02x02 (1)</span>
<span class="t" style="left:35.4px;top:421.69px;font-family:'DejaVu Sans','Liberation Sans',sans-serif;font-size:11px;line-height:15px;height:15px;color:#1b3b8e;letter-spacing:0.23px;width:155.1px;overflow:hidden;">StepsPrototype04x02x02</span>
<span class="t" style="left:34.2px;top:437.69px;font-family:'DejaVu Sans','Liberation Sans',sans-serif;font-size:11px;line-height:15px;height:15px;color:#1b3b8e;letter-spacing:0.23px;width:156.3px;overflow:hidden;">JoinMidPrototype04x06x01</span>
<span class="t" style="left:34.2px;top:453.69px;font-family:'DejaVu Sans','Liberation Sans',sans-serif;font-size:11px;line-height:15px;height:15px;color:#1b3b8e;letter-spacing:0.23px;width:156.3px;overflow:hidden;">JoinMidPrototype04x06x01</span>
<span class="t" style="left:245.3px;top:34.99px;font-family:'DejaVu Sans','Liberation Sans',sans-serif;font-size:11px;line-height:15px;height:15px;color:#111;letter-spacing:0.23px;">t</span>
<span class="t" style="left:286.5px;top:34.99px;font-family:'DejaVu Sans','Liberation Sans',sans-serif;font-size:11px;line-height:15px;height:15px;color:#111;letter-spacing:-0.179px;">Local</span>
<span class="t" style="left:332.8px;top:60.89px;font-family:'DejaVu Sans','Liberation Sans',sans-serif;font-size:11px;line-height:15px;height:15px;color:#222;letter-spacing:-0.017px;">Game</span>
<span class="t" style="left:233.1px;top:60.89px;font-family:'DejaVu Sans','Liberation Sans',sans-serif;font-size:11px;line-height:15px;height:15px;color:#222;letter-spacing:-0.017px;">Scene</span>
<span class="t" style="left:215.0px;top:77.59px;font-family:'DejaVu Sans','Liberation Sans',sans-serif;font-size:9px;line-height:13px;height:13px;color:#222;letter-spacing:1.419px;">Shaded</span>
<span class="t" style="left:346.8px;top:77.59px;font-family:'DejaVu Sans','Liberation Sans',sans-serif;font-size:9px;line-height:13px;height:13px;color:#222;letter-spacing:0.744px;">2D</span>
<span class="t" style="left:657.8px;top:77.69px;font-family:'DejaVu Sans','Liberation Sans',sans-serif;font-size:9px;line-height:13px;height:13px;color:#111;letter-spacing:0.466px;">Gizmos</span>
<span class="t" style="left:731.0px;top:75.84px;font-family:'DejaVu Sans','Liberation Sans',sans-serif;font-size:10px;line-height:14px;height:14px;color:#a4a4a4;letter-spacing:-0.153px;">All</span>

<div id="menu"></div><div id="gut"></div><div class="sep" style="top:75px"></div><div class="sep" style="top:126px"></div><div class="sep" style="top:199px"></div><div class="sep" style="top:272px"></div><div id="hl"></div>
<span class="t" style="left:11.6px;top:8.34px;font-family:'Liberation Sans',sans-serif;font-size:12px;line-height:17px;height:17px;color:#1a1a1a;transform:scaleX(1.0081);transform-origin:0 0;">File</span>
<span class="t" style="left:43.6px;top:8.34px;font-family:'Liberation Sans',sans-serif;font-size:12px;line-height:17px;height:17px;color:#1a1a1a;transform:scaleX(1.0054);transform-origin:0 0;">Edit</span>
<span class="t" style="left:77.5px;top:8.34px;font-family:'Liberation Sans',sans-serif;font-size:12px;line-height:17px;height:17px;color:#1a1a1a;transform:scaleX(0.9218);transform-origin:0 0;">Assets</span>
<span class="t" style="left:124.1px;top:8.34px;font-family:'Liberation Sans',sans-serif;font-size:12px;line-height:17px;height:17px;color:#1a1a1a;transform:scaleX(0.9872);transform-origin:0 0;">GameObject</span>
<span class="t" style="left:204.0px;top:8.34px;font-family:'Liberation Sans',sans-serif;font-size:12px;line-height:17px;height:17px;color:#1a1a1a;transform:scaleX(1.0557);transform-origin:0 0;">Component</span>
<span class="t" style="left:282.4px;top:8.34px;font-family:'Liberation Sans',sans-serif;font-size:12px;line-height:17px;height:17px;color:#1a1a1a;transform:scaleX(1.0432);transform-origin:0 0;">Mobile Input</span>
<span class="t" style="left:363.5px;top:8.34px;font-family:'Liberation Sans',sans-serif;font-size:12px;line-height:17px;height:17px;color:#1a1a1a;transform:scaleX(1.0612);transform-origin:0 0;">Window</span>
<span class="t" style="left:422.4px;top:8.34px;font-family:'Liberation Sans',sans-serif;font-size:12px;line-height:17px;height:17px;color:#1a1a1a;transform:scaleX(1.0005);transform-origin:0 0;">Help</span>
<span class="t" style="left:39.6px;top:31.34px;font-family:'Liberation Sans',sans-serif;font-size:12px;line-height:17px;height:17px;color:#1a1a1a;transform:scaleX(0.9580);transform-origin:0 0;">New Scene</span>
<span class="t" style="left:187.6px;top:31.34px;font-family:'Liberation Sans',sans-serif;font-size:12px;line-height:17px;height:17px;color:#1a1a1a;transform:scaleX(1.0686);transform-origin:0 0;">Ctrl+N</span>
<span class="t" style="left:39.6px;top:53.34px;font-family:'Liberation Sans',sans-serif;font-size:12px;line-height:17px;height:17px;color:#1a1a1a;transform:scaleX(0.9548);transform-origin:0 0;">Open Scene</span>
<span class="t" style="left:187.7px;top:53.34px;font-family:'Liberation Sans',sans-serif;font-size:12px;line-height:17px;height:17px;color:#1a1a1a;transform:scaleX(1.0481);transform-origin:0 0;">Ctrl+O</span>
<span class="t" style="left:39.7px;top:82.34px;font-family:'Liberation Sans',sans-serif;font-size:12px;line-height:17px;height:17px;color:#1a1a1a;transform:scaleX(0.9085);transform-origin:0 0;">Save Scene</span>
<span class="t" style="left:190.6px;top:82.34px;font-family:'Liberation Sans',sans-serif;font-size:12px;line-height:17px;height:17px;color:#1a1a1a;transform:scaleX(1.0033);transform-origin:0 0;">Ctrl+S</span>
<span class="t" style="left:39.7px;top:104.34px;font-family:'Liberation Sans',sans-serif;font-size:12px;line-height:17px;height:17px;color:#1a1a1a;transform:scaleX(0.8960);transform-origin:0 0;">Save Scene as...</span>
<span class="t" style="left:158.6px;top:104.34px;font-family:'Liberation Sans',sans-serif;font-size:12px;line-height:17px;height:17px;color:#1a1a1a;transform:scaleX(1.0170);transform-origin:0 0;">Ctrl+Shift+S</span>
<span class="t" style="left:39.6px;top:133.34px;font-family:'Liberation Sans',sans-serif;font-size:12px;line-height:17px;height:17px;color:#1a1a1a;transform:scaleX(0.9799);transform-origin:0 0;">New Project...</span>
<span class="t" style="left:39.6px;top:155.34px;font-family:'Liberation Sans',sans-serif;font-size:12px;line-height:17px;height:17px;color:#1a1a1a;transform:scaleX(0.9819);transform-origin:0 0;">Open Project...</span>
<span class="t" style="left:39.6px;top:177.34px;font-family:'Liberation Sans',sans-serif;font-size:12px;line-height:17px;height:17px;color:#1a1a1a;transform:scaleX(0.9479);transform-origin:0 0;">Save Project</span>
<span class="t" style="left:39.6px;top:206.34px;font-family:'Liberation Sans',sans-serif;font-size:12px;line-height:17px;height:17px;color:#1a1a1a;transform:scaleX(0.9749);transform-origin:0 0;">Build Settings...</span>
<span class="t" style="left:158.0px;top:206.34px;font-family:'Liberation Sans',sans-serif;font-size:12px;line-height:17px;height:17px;color:#1a1a1a;transform:scaleX(1.0262);transform-origin:0 0;">Ctrl+Shift+B</span>
<span class="t" style="left:39.6px;top:228.34px;font-family:'Liberation Sans',sans-serif;font-size:12px;line-height:17px;height:17px;color:#1a1a1a;transform:scaleX(1.0130);transform-origin:0 0;">Build &amp; Run</span>
<span class="t" style="left:189.9px;top:228.34px;font-family:'Liberation Sans',sans-serif;font-size:12px;line-height:17px;height:17px;color:#1a1a1a;transform:scaleX(1.0241);transform-origin:0 0;">Ctrl+B</span>
<span class="t" style="left:39.6px;top:250.34px;font-family:'Liberation Sans',sans-serif;font-size:12px;line-height:17px;height:17px;color:#1a1a1a;transform:scaleX(1.0054);transform-origin:0 0;">Build in Cloud...</span>
<span class="t" style="left:39.7px;top:279.34px;font-family:'Liberation Sans',sans-serif;font-size:12px;line-height:17px;height:17px;color:#1a1a1a;transform:scaleX(0.9293);transform-origin:0 0;">Exit</span>

<svg style="left:147.6px;top:86.2px;overflow:visible" width="18" height="26" viewBox="0 0 18 26"><path d="M2.500 3 L2.500 18.500 L6 15.300 L8.800 21.500 L11.300 20.500 L8.600 14.500 L13.300 14.500 Z" fill="#000" fill-opacity="0.18" stroke="#000" stroke-opacity="0.12" stroke-width="2"/><path d="M1 1 L1 17 L4.700 13.600 L7.400 19.800 L9.800 18.800 L7.200 12.600 L12 12.600 Z" fill="#fff" stroke="#111" stroke-width="1" stroke-linejoin="miter"/></svg>
<div style="left:0;top:0;width:1px;height:470px;background:#000"></div>
<div style="left:0;top:0;width:926px;height:1px;background:#000"></div>
<div style="left:924px;top:1px;width:1px;height:468px;background:#8c8c8c"></div><div style="left:925px;top:0;width:1px;height:470px;background:#000"></div>
<div style="left:0;top:468.5px;width:926px;height:1.5px;background:#000"></div>
</div>
</body></html>
